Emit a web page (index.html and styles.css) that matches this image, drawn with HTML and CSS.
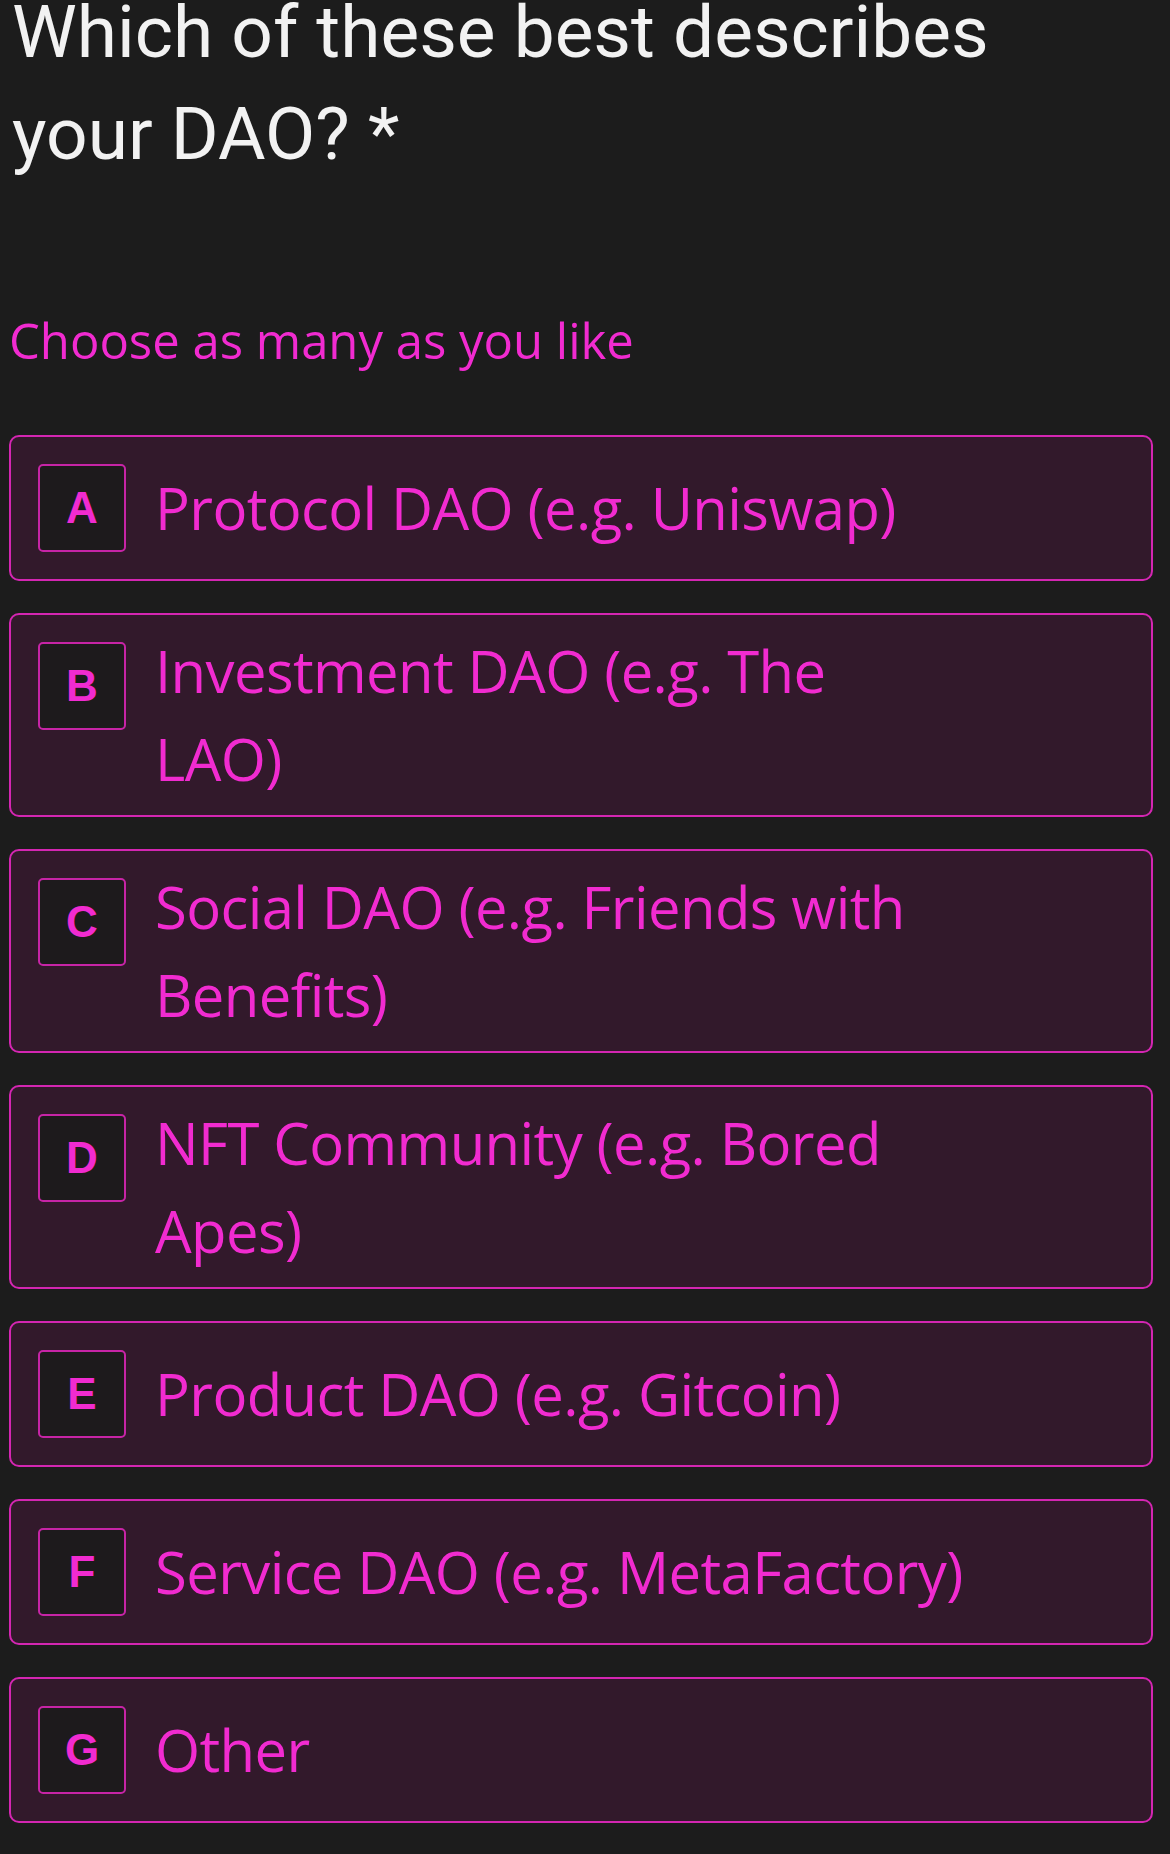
FILE: index.html
```html
<!DOCTYPE html>
<html lang="en">
<head>
    <meta charset="UTF-8">
    <meta name="viewport" content="width=device-width, initial-scale=1.0">
    <title>DAO type</title>
    <link rel="stylesheet" href="styles.css">
</head>
<body>

<div class="question">
    <!-- Question title -->
    <h1 class="question-title">Which of these best describes your DAO? *</h1>
    <p class="question-hint">Choose as many as you like</p>

    <!-- Answer choices -->
    <div class="choices">
        <div class="choice">
            <span class="choice-key">A</span>
            <span class="choice-label">Protocol DAO (e.g. Uniswap)</span>
        </div>
        <div class="choice">
            <span class="choice-key">B</span>
            <span class="choice-label">Investment DAO (e.g. The<br>LAO)</span>
        </div>
        <div class="choice">
            <span class="choice-key">C</span>
            <span class="choice-label">Social DAO (e.g. Friends with Benefits)</span>
        </div>
        <div class="choice">
            <span class="choice-key">D</span>
            <span class="choice-label">NFT Community (e.g. Bored Apes)</span>
        </div>
        <div class="choice">
            <span class="choice-key">E</span>
            <span class="choice-label">Product DAO (e.g. Gitcoin)</span>
        </div>
        <div class="choice">
            <span class="choice-key">F</span>
            <span class="choice-label">Service DAO (e.g. MetaFactory)</span>
        </div>
        <div class="choice">
            <span class="choice-key">G</span>
            <span class="choice-label">Other</span>
        </div>
    </div>
</div>

</body>
</html>
```

FILE: styles.css
```css
body {
    margin: 0;
    background-color: #1c1c1c;
    font-family: "Open Sans", "Noto Sans", sans-serif;
}

.question {
    padding: 0 17px 40px 9px;
}

/* Title */
.question-title {
    max-width: 1010px;
    margin: -19px 0 0 3px;
    font-family: Roboto, "Liberation Sans", sans-serif;
    font-size: 73px;
    font-weight: 400;
    line-height: 102px;
    color: #f2f2f2;
}

.question-hint {
    margin: 121px 0 0 0;
    font-size: 49px;
    line-height: 68px;
    color: #f12bd0;
}

/* Choices */
.choices {
    display: flex;
    flex-direction: column;
    gap: 32px;
    margin-top: 61px;
}

.choice {
    display: flex;
    align-items: center;
    padding: 12px 150px 12px 27px;
    background-color: #32192b;
    border: 2px solid #d426b2;
    border-radius: 10px;
}

.choice-key {
    flex: none;
    align-self: flex-start;
    box-sizing: border-box;
    width: 88px;
    height: 88px;
    margin: 15px 29px 15px 0;
    display: flex;
    align-items: center;
    justify-content: center;
    background-color: #1d1a1c;
    border: 2px solid #c724a6;
    border-radius: 5px;
    font-family: "Liberation Sans", Arial, sans-serif;
    font-size: 44px;
    font-weight: 700;
    color: #f12bd0;
}

.choice-label {
    font-size: 58px;
    letter-spacing: -0.6px;
    line-height: 88px;
    color: #f12bd0;
}
```
